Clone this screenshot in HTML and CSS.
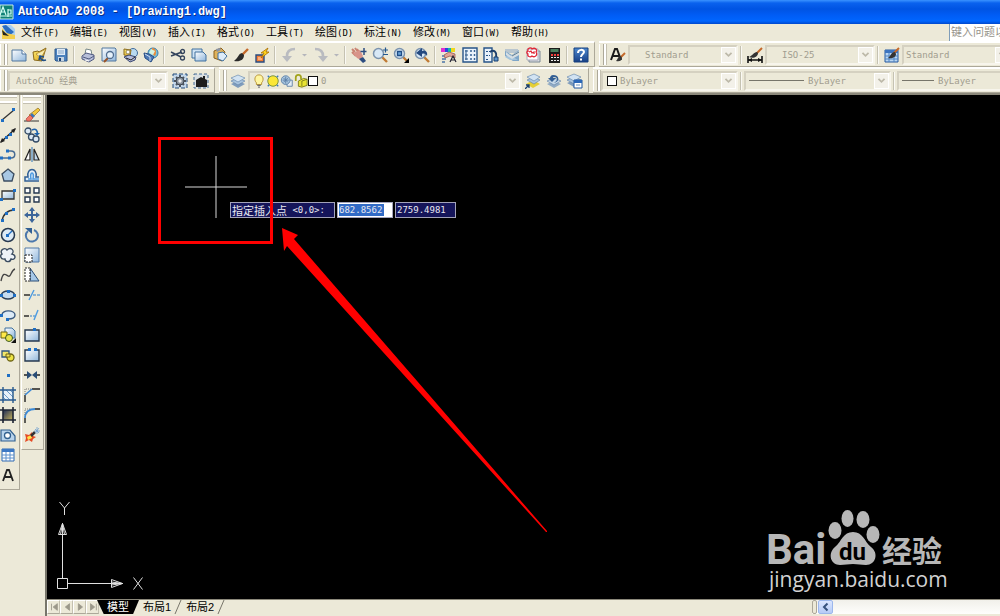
FILE: index.html
```html
<!DOCTYPE html>
<html lang="zh-CN">
<head>
<meta charset="utf-8">
<title>AutoCAD 2008 - [Drawing1.dwg]</title>
<link rel="stylesheet" href="styles.css">
</head>
<body>
<svg class="defs" aria-hidden="true">
  <defs>
    <linearGradient id="page" x1="0" y1="0" x2="1" y2="1"><stop offset="0" stop-color="#fff"/><stop offset="1" stop-color="#8fb6dc"/></linearGradient>
    <linearGradient id="gold" x1="0" y1="0" x2="1" y2="1"><stop offset="0" stop-color="#fff27a"/><stop offset="1" stop-color="#d99a10"/></linearGradient>
    <linearGradient id="blue" x1="0" y1="0" x2="0" y2="1"><stop offset="0" stop-color="#4f8ad0"/><stop offset="1" stop-color="#173f86"/></linearGradient>
    <linearGradient id="dark" x1="0" y1="0" x2="1" y2="1"><stop offset="0" stop-color="#1c2a55"/><stop offset="1" stop-color="#c8b45a"/></linearGradient>
    <g id="layers"><path d="M1 11l7-3 7 3-7 4z" fill="#7f9cbc"/><path d="M1 8l7-3 7 3-7 4z" fill="#a9c4de" stroke="#5d80a8" stroke-width=".6"/><path d="M1 5l7-3 7 3-7 4z" fill="#d2e3f2" stroke="#5d80a8" stroke-width=".6"/></g>
    <g id="lens"><path d="M10 10l5 5" stroke="#c07a34" stroke-width="2.4"/><circle cx="6.5" cy="6.5" r="5" fill="#d8e8f6" stroke="#7b93ad" stroke-width="1.5"/></g>
    <g id="brush"><path d="M15 2l-6 6" stroke="#c4682a" stroke-width="2.4"/><path d="M11 8L9 6c-4 1-3 4-8 8 6 1 10-1 10-6z" fill="#2b2b2b"/></g>
    <g id="chevron"><path d="M4 5l3.500 3.500L11 5" fill="none" stroke="#bdb9a9" stroke-width="2"/></g>
  </defs>
</svg>

<header class="title">
  <svg class="logo" viewBox="0 0 14 16"><path d="M0 1h13v14H0z" fill="#0f8176" stroke="#c9ece4"/><path d="M0 11l3-8 3 8M1 8h4M8 5v8M8 6h3v4H8M0 12h12" fill="none" stroke="#d5fff5" stroke-width="1.200"/></svg>
  <h1>AutoCAD 2008 - [Drawing1.dwg]</h1>
</header>

<nav class="menu">
  <svg class="doc" viewBox="0 0 16 16"><path d="M3 1h8l4 4v9H3z" fill="#a9d0f2"/><path d="M2 2l4-1 8 7-5 4z" fill="#2b6cc0"/><path d="M2 4l4 5 9 2v4H2z" fill="#f4cf4a"/><path d="M2 6l7 6-6-1z" fill="#222"/></svg>
  <button><b>文件</b>(F)</button><button><b>编辑</b>(E)</button><button><b>视图</b>(V)</button><button><b>插入</b>(I)</button><button><b>格式</b>(O)</button><button><b>工具</b>(T)</button><button><b>绘图</b>(D)</button><button><b>标注</b>(N)</button><button><b>修改</b>(M)</button><button><b>窗口</b>(W)</button><button><b>帮助</b>(H)</button>
  <input class="ask" aria-label="帮助" placeholder="键入问题以获取帮助">
</nav>

<div class="row">
  <div class="bar">
    <i class="grip"></i>
    <button aria-label="新建"><svg viewBox="0 0 16 16"><path d="M1 3h10l4 4v7H1z" fill="url(#page)" stroke="#51779e"/><path d="M11 3v4h4" fill="#fff" stroke="#51779e"/></svg></button>
    <button aria-label="打开"><svg viewBox="0 0 16 16"><path d="M1 5l5-1 1 1 7-4-4 13-8-1z" fill="url(#gold)" stroke="#8a6a1c"/><path d="M4 7l10-5-5 9z" fill="#f8edb0" stroke="#a98024" stroke-width=".7"/><path d="M14 13c-3 1-5 0-6-3M7 13l1-4 4 1" fill="none" stroke="#214f86" stroke-width="1.600"/></svg></button>
    <button aria-label="保存"><svg viewBox="0 0 16 16"><path d="M2 2h12v12H3l-1-1z" fill="#4d82bd" stroke="#2b578c"/><path d="M4 2h8v6H4z" fill="#dfebf7"/><path d="M5 4h6M5 6h6" stroke="#8aa9c9"/><path d="M5 10h6v4H5z" fill="#c5d4e3"/><path d="M6 11h2v3H6z" fill="#214575"/></svg></button>
    <i class="sep"></i>
    <button aria-label="打印"><svg viewBox="0 0 16 16"><path d="M5 7l1-5 5 1 1 5z" fill="#fff" stroke="#788"/><path d="M2 9l4-3 8 2v4l-5 3-7-3z" fill="#b8bfd9" stroke="#505a80"/><path d="M3 10l6 2 5-3" fill="none" stroke="#505a80"/><path d="M5 13l4 1" stroke="#fff"/></svg></button>
    <button aria-label="打印预览"><svg viewBox="0 0 16 16"><path d="M1 1h13l1 1v12H1z" fill="url(#page)" stroke="#51779e"/><path d="M7 11l-4 4" stroke="#9b5426" stroke-width="2"/><circle cx="9" cy="8" r="3.500" fill="#e6f1fa" stroke="#526e90" stroke-width="1.300"/></svg></button>
    <button aria-label="发布"><svg viewBox="0 0 16 16"><circle cx="11" cy="6" r="4.500" fill="#b9daf0" stroke="#426a98"/><path d="M2 2l7 1-1 6-6-1z" fill="url(#gold)" stroke="#8a6a1c"/><circle cx="6" cy="5" r="2" fill="#fff" stroke="#985"/><path d="M2 10l5-2 7 2-1 3-5 2z" fill="#b6bddc" stroke="#3a4670"/><path d="M4 11l5 2 4-3" fill="none" stroke="#222"/></svg></button>
    <button aria-label="三维 DWF"><svg viewBox="0 0 16 16"><circle cx="10" cy="6" r="5" fill="#74c1dc" stroke="#3d7ca8"/><path d="M9 1c4 0 5 4 3 8l-3-2z" fill="#ec8a36"/><path d="M8 2l4 2-2 4-4-2z" fill="#d5f2e0"/><path d="M1 6l5 1 5 3-3 5-6-4z" fill="#4e79b6" stroke="#284d84"/><path d="M2 7l5 3v4" fill="none" stroke="#cde"/></svg></button>
    <i class="sep"></i>
    <button aria-label="剪切"><svg viewBox="0 0 16 16"><path d="M1 5l10 5M1 9l11-4" stroke="#34445c" stroke-width="1.500"/><circle cx="12.500" cy="4.500" r="2" fill="none" stroke="#34445c" stroke-width="1.300"/><circle cx="12.500" cy="11" r="2" fill="none" stroke="#34445c" stroke-width="1.300"/></svg></button>
    <button aria-label="复制"><svg viewBox="0 0 16 16"><path d="M1 2h10v9H1z" fill="#cfe3f4" stroke="#41719f"/><path d="M4 5h8l3 3v6H4z" fill="url(#page)" stroke="#41719f"/></svg></button>
    <button aria-label="粘贴"><svg viewBox="0 0 16 16"><path d="M2 4l7-3 4 4-3 9-8-3z" fill="#e0b35a" stroke="#8a6020"/><path d="M4 2l4-1 1 2-4 2z" fill="#8b95a6"/><path d="M6 6l5-1 4 4-4 5-5-2z" fill="#dcebf8" stroke="#41719f"/></svg></button>
    <button aria-label="特性匹配"><svg viewBox="0 0 16 16"><use href="#brush"/></svg></button>
    <button aria-label="块编辑器"><svg viewBox="0 0 16 16"><path d="M2 8h8v7H2z" fill="#f37c35" stroke="#284c80" stroke-width="1.400"/><path d="M4 10h4v3H4z" fill="#ffb07a"/><path d="M14 1L7 6h3l-3 5 8-6h-3z" fill="#ffd51e" stroke="#a76a00" stroke-width=".8"/></svg></button>
    <i class="sep"></i>
    <button aria-label="放弃"><svg viewBox="0 0 16 16"><path d="M14 2C8 2 6 5 6 9" fill="none" stroke="#b9bbc0" stroke-width="2.600"/><path d="M1 9h10l-5 6z" fill="#b9bbc0"/></svg></button>
    <button class="drop" aria-label="放弃列表"><svg viewBox="0 0 8 16"><path d="M1 7h5L3.500 9.500z" fill="#b4b5bb"/></svg></button>
    <button aria-label="重做"><svg viewBox="0 0 16 16"><path d="M2 2c6 0 8 3 8 7" fill="none" stroke="#b9bbc0" stroke-width="2.600"/><path d="M5 9h10l-5 6z" fill="#b9bbc0"/></svg></button>
    <button class="drop" aria-label="重做列表"><svg viewBox="0 0 8 16"><path d="M1 7h5L3.500 9.500z" fill="#b4b5bb"/></svg></button>
    <i class="sep"></i>
    <button aria-label="实时平移"><svg viewBox="0 0 16 16"><path d="M1 2l3 3M1 5l4 4M4 1l4 5M6 2l4 6" stroke="#c98272" stroke-width="2"/><path d="M2 6l7-3 3 6-2 4-4-2z" fill="#d8948a"/><path d="M8 12l4-2 3 4-3 2z" fill="#2c4c80"/><path d="M13 1v7M9.500 4.500h6" stroke="#2c4c80" stroke-width="1.500"/></svg></button>
    <button aria-label="实时缩放"><svg viewBox="0 0 16 16"><use href="#lens"/><path d="M11 3h5M13.500 .5v5M11 7.500h5" stroke="#24588f" stroke-width="1.200"/></svg></button>
    <button aria-label="窗口缩放"><svg viewBox="0 0 16 16"><use href="#lens"/><path d="M4.500 4.500h4v4h-4z" fill="#6ba4d8" stroke="#1f4d86" stroke-width="1.300"/><path d="M16 11v5h-5z" fill="#000"/></svg></button>
    <button aria-label="缩放上一个"><svg viewBox="0 0 16 16"><use href="#lens"/><path d="M13 9c1-5-2-6-5-5V1L2 6l6 4V7c2-1 4 0 5 2z" fill="#254a80"/></svg></button>
    <i class="sep"></i>
    <button aria-label="特性"><svg viewBox="0 0 16 16"><path d="M0 1h4v4H0z" fill="#e030d0"/><path d="M4 1h3v4H4z" fill="#2b48e0"/><path d="M7 1h3v4H7z" fill="#12b8b0"/><path d="M10 1h4v4h-4z" fill="#f0d81c"/><path d="M3 8l5-3 6 2v4l-5-2-5 2z" fill="#e2a596" stroke="#8b4d42" stroke-width=".7"/><path d="M1 9h2M1 12h4M1 15h3" stroke="#4b74a6" stroke-width="1.500"/><path d="M9 15l3-6 3 6M10 13h4" fill="none" stroke="#223" stroke-width="1.200"/></svg></button>
    <button aria-label="设计中心"><svg viewBox="0 0 16 16"><path d="M1 1h14v14H1z" fill="#e9f2fb" stroke="#275488" stroke-width="1.400"/><path d="M4 3v10M3 4h3M3 8h3M3 12h3" stroke="#275488"/><path d="M8.500 3.500h1v1h-1zM12 3.500h1v1h-1zM8.500 7.500h1v1h-1zM12 7.500h1v1h-1zM8.500 11.500h1v1h-1zM12 11.500h1v1h-1z" fill="#7ba7d3" stroke="#275488" stroke-width=".8"/></svg></button>
    <button aria-label="工具选项板"><svg viewBox="0 0 16 16"><path d="M1 1h8v14H1z" fill="#e9f2fb" stroke="#275488" stroke-width="1.400"/><path d="M3 4h2v1H3zM3 8h2v1H3zM3 12h2v1H3zM6 4h1v1H6zM6 8h1v1H6z" fill="#275488"/><path d="M7 5c4-3 7 0 6 5" fill="none" stroke="#1c3f6c" stroke-width="1.800"/><path d="M11 10h4v4h-4z" fill="#5e95cc" stroke="#173e70"/></svg></button>
    <button aria-label="图纸集管理器"><svg viewBox="0 0 16 16"><path d="M1 2h13v4H1z" fill="#b9c6cf"/><path d="M1 4l7 4 7-5v11H9L1 9z" fill="#7fa6c8"/><path d="M1 10l5-2 8 5H6z" fill="#a4c4dc"/><path d="M2 5l5 4 8-5v4l-7 4-6-4z" fill="#d5dee3"/><path d="M8 9l7-4" stroke="#5f7d92"/></svg></button>
    <button aria-label="标记集管理器"><svg viewBox="0 0 16 16"><path d="M4 4h11v11H4z" fill="#d9dde0" stroke="#7a8794"/><path d="M2 2h11v11H2z" fill="#fff" stroke="#aab"/><path d="M3 4c-1-3 3-4 4-2 3-2 6 1 4 3 2 3-1 6-4 4-2 2-5 0-4-2-2-1-1-3 0-3zM4 5l2-1 1 2 2-1v2" fill="none" stroke="#e02838" stroke-width="1.300"/></svg></button>
    <button aria-label="快速计算器"><svg viewBox="0 0 16 16"><path d="M3 1h11v15H3z" fill="#1b1b1b"/><path d="M4.500 2h8v3h-8z" fill="#4b8060"/><path d="M5 7h2v2H5zM8 7h2v2H8zM11 7h2v2h-2z" fill="#f04040"/><path d="M5 10h2v1H5zM8 10h2v1H8zM11 10h2v1h-2zM5 13h2v1H5zM8 13h2v1H8zM11 13h2v1h-2z" fill="#eee"/></svg></button>
    <i class="sep"></i>
    <button aria-label="帮助"><svg viewBox="0 0 16 16"><path d="M1 1h14v14H1z" fill="url(#blue)" stroke="#173f7c"/><path d="M5 6c0-4 6-4 6-1 0 2-3 2-3 5M8 11.500v2" fill="none" stroke="#fff" stroke-width="2"/></svg></button>
  </div>
  <div class="bar last">
    <i class="grip"></i>
    <button aria-label="文字样式"><svg viewBox="0 0 16 16"><path d="M1 13L5 2h2l4 11M3 9h6" fill="none" stroke="#1b1b1b" stroke-width="2"/><path d="M15 6l-5 5" stroke="#c4682a" stroke-width="2"/><path d="M11 9c-3 0-3 3-5 5 4 1 6-1 6-3z" fill="#333"/></svg></button>
    <label class="combo style"><select disabled aria-label="文字样式"><option>Standard</option></select><svg viewBox="0 0 15 15"><use href="#chevron"/></svg></label>
    <i class="sep"></i>
    <button aria-label="标注样式"><svg viewBox="0 0 16 16"><path d="M1 9v7M15 9v7M1 13h14" stroke="#111" stroke-width="1.600"/><path d="M1 13l4-2v4zM15 13l-4-2v4z" fill="#111"/><path d="M15 1L9 7" stroke="#c4682a" stroke-width="2"/><path d="M10 5c-3 0-5 4-8 5 4 2 9 0 9-4z" fill="#333"/></svg></button>
    <label class="combo style"><select disabled aria-label="标注样式"><option>ISO-25</option></select><svg viewBox="0 0 15 15"><use href="#chevron"/></svg></label>
    <i class="sep"></i>
    <button aria-label="表格样式"><svg viewBox="0 0 16 16"><path d="M1 3h13v12H1z" fill="#b9d6f2" stroke="#2558a0"/><path d="M1 3h13v3H1z" fill="#3c74c0"/><path d="M1 9h13M1 12h13M5 6v9M10 6v9" stroke="#4e84c4"/><path d="M15 1L9 7" stroke="#c4682a" stroke-width="2"/><path d="M11 5c-4 0-4 4-7 6 4 1 8-1 8-4z" fill="#333"/></svg></button>
    <label class="combo style near"><select disabled aria-label="表格样式"><option>Standard</option></select><svg viewBox="0 0 15 15"><use href="#chevron"/></svg></label>
  </div>
</div>

<div class="row">
  <div class="bar">
    <i class="grip"></i>
    <label class="combo space"><select disabled aria-label="工作空间"><option>AutoCAD 经典</option></select><svg viewBox="0 0 15 15"><use href="#chevron"/></svg></label>
    <button aria-label="工作空间设置"><svg viewBox="0 0 16 16"><path d="M1 1h14v14H1z" fill="#c3d7ea" stroke="#234a78" stroke-dasharray="4 2"/><path d="M8 2v12M2 8h12M4 4l8 8M12 4l-8 8" stroke="#4c565f" stroke-width="2"/><circle cx="8" cy="8" r="4" fill="#87919b" stroke="#3e4650"/><circle cx="8" cy="8" r="1.700" fill="#f0f0f0"/></svg></button>
    <button aria-label="我的工作空间"><svg viewBox="0 0 16 16"><path d="M1 1h14v14H1z" fill="#d9dfe2" stroke="#456a94" stroke-dasharray="3 2"/><path d="M3 7l5-3 2 1V3h2v3l2 1v7H3z" fill="#1d1d1d"/></svg></button>
  </div>
  <div class="bar">
    <i class="grip"></i>
    <button aria-label="图层特性管理器"><svg viewBox="0 0 16 16"><use href="#layers"/></svg></button>
    <label class="combo layer">
      <svg viewBox="0 0 16 16"><path d="M5 10C2 7 3 1 8 1s6 6 3 9v2H5z" fill="#fff6a0" stroke="#b28c28"/><path d="M6 13h4M7 15h2" stroke="#6c6c74" stroke-width="1.500"/></svg><svg viewBox="0 0 16 16"><path d="M2 2l2 2M14 2l-2 2M2 14l2-2M14 14l-2-2" stroke="#3a78b8" stroke-width="1.500"/><circle cx="8" cy="8" r="6" fill="#fbe736" stroke="#6f8a35"/></svg><svg viewBox="0 0 16 16"><path d="M8 7h6v7H8z" fill="#e3edf5" stroke="#5b7fa6"/><circle cx="6.500" cy="7" r="5" fill="#a9c6df" stroke="#5b7fa6"/><path d="M6.500 3v8M3 7h7M4 4.500l5 5M9 4.500l-5 5" stroke="#5b7fa6"/></svg><svg viewBox="0 0 16 16"><path d="M2 8V4c0-4 6-4 6 0v2" fill="none" stroke="#a3a31c" stroke-width="2"/><path d="M5 8l6-3 4 1v7l-6 2-4-1z" fill="#e8e334" stroke="#79791a"/><path d="M9 8v6M9 8l6-2" stroke="#79791a"/></svg><i class="swatch"></i>
      <select disabled aria-label="图层"><option>0</option></select><svg viewBox="0 0 15 15"><use href="#chevron"/></svg></label>
    <button aria-label="置为当前图层"><svg viewBox="0 0 16 16"><path d="M1 11l7-4 7 4-7 4z" fill="#e5cf36"/><path d="M2 7l7-3 6 3-6 4z" fill="#a9c4de" stroke="#5d80a8" stroke-width=".6"/><path d="M2 4l7-3 6 3-6 4z" fill="#d2e3f2" stroke="#5d80a8" stroke-width=".6"/><path d="M0 16l4-4M1 12h3v3" fill="none" stroke="#173e70" stroke-width="1.300"/></svg></button>
    <button aria-label="上一个图层"><svg viewBox="0 0 16 16"><path d="M1 11l7-3 7 3-7 4z" fill="#91abc4"/><path d="M1 8l7-3 7 3-7 4z" fill="#c5d7e7" stroke="#5d80a8" stroke-width=".6"/><path d="M8 10c6-1 6-8-1-8C5 2 4 4 4 5H2l4 4 4-4H7c0-2 4-1 4 1 0 1-1 3-3 4z" fill="#335f94"/></svg></button>
    <button aria-label="图层状态"><svg viewBox="0 0 16 16"><g transform="translate(-1 -1)"><use href="#layers"/></g><path d="M7 7h8v8H7z" fill="#fff" stroke="#1e56a0"/><path d="M7 7h8v3H7z" fill="#2c68b8"/><path d="M9 12h4" stroke="#6e93bc"/></svg></button>
  </div>
  <div class="bar last">
    <i class="grip"></i>
    <label class="combo color"><i class="swatch"></i><select disabled aria-label="颜色"><option>ByLayer</option></select><svg viewBox="0 0 15 15"><use href="#chevron"/></svg></label>
    <i class="sep"></i>
    <label class="combo line"><i class="rule"></i><select disabled aria-label="线型"><option>ByLayer</option></select><svg viewBox="0 0 15 15"><use href="#chevron"/></svg></label>
    <i class="sep"></i>
    <label class="combo weight"><i class="rule"></i><select disabled aria-label="线宽"><option>ByLayer</option></select><svg viewBox="0 0 15 15"><use href="#chevron"/></svg></label>
  </div>
</div>

<main class="work">
  <div class="side draw">
    <i class="hgrip"></i>
    <button aria-label="直线"><svg viewBox="0 0 16 16"><path d="M2 13L14 3" stroke="#333" stroke-width="1.300"/><path d="M1 12h3v3H1zM12 1h3v3h-3z" fill="#1f6fc4"/></svg></button>
    <button aria-label="构造线"><svg viewBox="0 0 16 16"><path d="M1 15L15 2" stroke="#222" stroke-width="1.400"/><path d="M0 16l2-5 3 3zM16 1l-2 5-3-3z" fill="#222"/><path d="M5 9h3v3H5zM9 6h3v3H9z" fill="#1f6fc4"/></svg></button>
    <button aria-label="多段线"><svg viewBox="0 0 16 16"><path d="M2 11h9c5 0 5-7 0-7H8" fill="none" stroke="#486c94" stroke-width="1.500"/><path d="M0 9.500h3v3H0zM8 9.500h3v3H8zM6 2.500h3v3H6z" fill="#1f6fc4"/></svg></button>
    <button aria-label="正多边形"><svg viewBox="0 0 16 16"><path d="M8 2l6 5-2 7H4L2 7z" fill="#a8c8e4" stroke="#3b4c60" stroke-width="1.300"/></svg></button>
    <button aria-label="矩形"><svg viewBox="0 0 16 16"><path d="M2 4h12v8H2z" fill="url(#page)" stroke="#333" stroke-width="1.300"/><path d="M0 11h3v3H0zM13 2h3v3h-3z" fill="#1f6fc4"/></svg></button>
    <button aria-label="圆弧"><svg viewBox="0 0 16 16"><path d="M2 14C3 7 8 3 14 3" fill="none" stroke="#333" stroke-width="1.400"/><path d="M1 12h3v3H1zM5 5h3v3H5zM12 1h3v3h-3z" fill="#1f6fc4"/></svg></button>
    <button aria-label="圆"><svg viewBox="0 0 16 16"><circle cx="8" cy="8" r="6.500" fill="#dceaf6" stroke="#26384f" stroke-width="1.500"/><path d="M8 8l4-4" stroke="#1f6fc4" stroke-width="1.300"/><path d="M6 7h3v3H6z" fill="#1f6fc4"/></svg></button>
    <button aria-label="修订云线"><svg viewBox="0 0 16 16"><path d="M2 7C-1 3 5 0 7 3c4-4 8 1 5 4 5 1 3 7-1 5-1 4-6 3-6 0-5 1-5-4-3-5z" fill="#edf2f7" stroke="#3b4c60" stroke-width="1.400"/></svg></button>
    <button aria-label="样条曲线"><svg viewBox="0 0 16 16"><path d="M1 14c2-9 4-7 7-5s3-6 7-7" fill="none" stroke="#444" stroke-width="1.400"/></svg></button>
    <button aria-label="椭圆"><svg viewBox="0 0 16 16"><ellipse cx="8" cy="8" rx="6.500" ry="4" fill="#c7dcef" stroke="#2b3e56" stroke-width="1.400"/><path d="M0 7h3v3H0zM13 7h3v3h-3zM7 3h3v3H7z" fill="#1f6fc4"/></svg></button>
    <button aria-label="椭圆弧"><svg viewBox="0 0 16 16"><path d="M2 8c0-6 13-5 13 0 0 4-5 4-7 4" fill="#dceaf6" stroke="#3b5a80" stroke-width="1.400"/><path d="M0 7h3v3H0zM6 11h3v3H6z" fill="#1f6fc4"/></svg></button>
    <button aria-label="插入块"><svg viewBox="0 0 16 16"><path d="M5 1h7l3 3v7H5z" fill="url(#page)" stroke="#41719f"/><path d="M1 5h6v6H1z" fill="#ffe94a" stroke="#6d6514"/><circle cx="9" cy="11" r="3.500" fill="#e8e44c" stroke="#3d5a20"/><path d="M16 11v5h-5z" fill="#111"/></svg></button>
    <button aria-label="创建块"><svg viewBox="0 0 16 16"><path d="M2 4h7v6H2z" fill="#f1e76a" stroke="#31577c" stroke-width="1.300"/><circle cx="10.500" cy="10.500" r="3.500" fill="#eee443" stroke="#6d6514" stroke-width="1.300"/><path d="M6 7h4v3H6z" fill="#f4e35a" stroke="#6d6514"/></svg></button>
    <button aria-label="点"><svg viewBox="0 0 16 16"><path d="M7 7h3v3H7z" fill="#1f6fc4"/></svg></button>
    <button aria-label="图案填充"><svg viewBox="0 0 16 16"><path d="M3 3h10v10H3z" fill="#e8f1f9"/><path d="M3 6l7 7M3 10l3 3M6 3l7 7M10 3l3 3" stroke="#6d9cc8"/><path d="M3 0v16M13 0v16M0 3h16M0 13h16" stroke="#26588e" stroke-width="1.400"/></svg></button>
    <button aria-label="渐变色"><svg viewBox="0 0 16 16"><path d="M3 3h10v10H3z" fill="url(#dark)"/><path d="M3 0v16M13 0v16M0 3h16M0 13h16" stroke="#1d2433" stroke-width="1.600"/></svg></button>
    <button aria-label="面域"><svg viewBox="0 0 16 16"><path d="M1 3h9l5 6v5H1z" fill="#b8d3ec" stroke="#31608f" stroke-width="1.200"/><circle cx="7.500" cy="8.500" r="3" fill="#fff" stroke="#31608f" stroke-width="1.300"/></svg></button>
    <button aria-label="表格"><svg viewBox="0 0 16 16"><path d="M2 2h12v12H2z" fill="#fff" stroke="#2d68b2"/><path d="M2 2h12v3H2z" fill="#3c78c4"/><path d="M2 8h12M2 11h12M6 5v9M10 5v9" stroke="#5d90cc"/></svg></button>
    <button aria-label="多行文字"><svg viewBox="0 0 16 16"><path d="M3 14L7 3h2l4 11M5 10h6" fill="none" stroke="#222" stroke-width="1.800"/></svg></button>
  </div>
  <div class="side modify">
    <i class="hgrip"></i>
    <button aria-label="删除"><svg viewBox="0 0 16 16"><path d="M0 14h15" stroke="#333"/><path d="M14 1l2 2-8 8-3-3z" fill="#f4c93c" stroke="#8a6a1c" stroke-width=".7"/><path d="M8 6l3 3-2 2-3-3z" fill="#3d75b8"/><path d="M6 8l3 3-3 3H3l-1-2z" fill="#f07a68" stroke="#a33" stroke-width=".6"/></svg></button>
    <button aria-label="复制对象"><svg viewBox="0 0 16 16"><circle cx="4" cy="4" r="3" fill="#dbe8f4" stroke="#334b66" stroke-width="1.300"/><circle cx="7.500" cy="10" r="3" fill="#dbe8f4" stroke="#334b66" stroke-width="1.300"/><circle cx="12" cy="12" r="3" fill="#dbe8f4" stroke="#334b66" stroke-width="1.300"/><path d="M8 3c4-2 6 1 5 4" fill="none" stroke="#1d62ac" stroke-width="1.500"/><path d="M10 6h6l-3 3z" fill="#1d62ac"/></svg></button>
    <button aria-label="镜像"><svg viewBox="0 0 16 16"><path d="M6 2v11H1z" fill="#fff" stroke="#222" stroke-width="1.200"/><path d="M10 2v11h5z" fill="#c5dbee" stroke="#222" stroke-width="1.200"/><path d="M8 0v15" stroke="#2872b8"/></svg></button>
    <button aria-label="偏移"><svg viewBox="0 0 16 16"><path d="M15 14H1v-4h3C2 0 14 0 12 10h3" fill="#e4eef6" stroke="#315f94" stroke-width="1.500"/><path d="M4 12h3C5 4 11 4 9 12h6" fill="none" stroke="#4c9ae0" stroke-width="1.500"/></svg></button>
    <button aria-label="阵列"><svg viewBox="0 0 16 16"><path d="M1 1h5v5H1zM10 1h5v5h-5zM1 10h5v5H1zM10 10h5v5h-5z" fill="#fff" stroke="#26384f" stroke-width="1.400"/></svg></button>
    <button aria-label="移动"><svg viewBox="0 0 16 16"><path d="M8 2v12M2 8h12" stroke="#3c659a" stroke-width="2"/><path d="M8 0l3 4H5zM8 16l3-4H5zM0 8l4-3v6zM16 8l-4-3v6z" fill="#3c659a"/></svg></button>
    <button aria-label="旋转"><svg viewBox="0 0 16 16"><path d="M4 4a6 6 0 1 0 6-1" fill="none" stroke="#4c78ac" stroke-width="2"/><path d="M1 1h7v6z" fill="#315f94"/></svg></button>
    <button aria-label="缩放"><svg viewBox="0 0 16 16"><path d="M1 1h14v14H1z" fill="url(#page)" stroke="#537ba8"/><path d="M1 8h7v7H1z" fill="#fff" stroke="#222" stroke-dasharray="2 1"/></svg></button>
    <button aria-label="拉伸"><svg viewBox="0 0 16 16"><path d="M6 1l9 13H6z" fill="#a7c9e8" stroke="#284c76"/><path d="M1 1h5v13H1z" fill="#fff" stroke="#222" stroke-dasharray="2 1"/></svg></button>
    <button aria-label="修剪"><svg viewBox="0 0 16 16"><path d="M0 8h6" stroke="#222" stroke-width="1.400"/><path d="M9 8h7" stroke="#2f80cc" stroke-dasharray="3 1"/><path d="M5 13l5-10" stroke="#4a9be2" stroke-width="1.400"/></svg></button>
    <button aria-label="延伸"><svg viewBox="0 0 16 16"><path d="M0 9h5" stroke="#222" stroke-width="1.400"/><path d="M6 9h5" stroke="#2f80cc" stroke-dasharray="2 1"/><path d="M10 13l4-10" stroke="#4a9be2" stroke-width="1.400"/></svg></button>
    <button aria-label="打断于点"><svg viewBox="0 0 16 16"><path d="M1 3h14v11H1z" fill="url(#page)" stroke="#26384f" stroke-width="1.400"/><path d="M9 1h3v3H9z" fill="#1f6fc4"/></svg></button>
    <button aria-label="打断"><svg viewBox="0 0 16 16"><path d="M5 3H1v11h14V3h-4" fill="url(#page)" stroke="#26384f" stroke-width="1.400"/><path d="M4 1h3v3H4zM10 1h3v3h-3z" fill="#1f6fc4"/></svg></button>
    <button aria-label="合并"><svg viewBox="0 0 16 16"><path d="M0 8h6M10 8h6" stroke="#222" stroke-width="1.400"/><path d="M3 4l5 4-5 4zM13 4L8 8l5 4z" fill="#284c76"/></svg></button>
    <button aria-label="倒角"><svg viewBox="0 0 16 16"><path d="M1 15V8M8 2h8" stroke="#222" stroke-width="1.400"/><path d="M1 8l7-6" stroke="#3d8ad6" stroke-width="1.600"/><path d="M1 7V2h6" fill="none" stroke="#777" stroke-dasharray="1 1"/></svg></button>
    <button aria-label="圆角"><svg viewBox="0 0 16 16"><path d="M1 16v-5M11 2h5" stroke="#222" stroke-width="1.400"/><path d="M1 11c0-6 4-9 10-9" fill="none" stroke="#3d8ad6" stroke-width="1.800"/><path d="M1 8V2h6" fill="none" stroke="#777" stroke-dasharray="1 1"/></svg></button>
    <button aria-label="分解"><svg viewBox="0 0 16 16"><path d="M1 7l4 1 3-3 1 4 3 1-3 2-1 3-3-2-4 2 1-4z" fill="#e54a24"/><path d="M3 10l4-2 1 3-4 2z" fill="#ffe14a"/><path d="M7 9l4-4" stroke="#333" stroke-width="2.500"/><path d="M11 2l4 4M15 1l-4 5M13 0v7M10 4h6" stroke="#6f9ed0" stroke-width=".8"/></svg></button>
  </div>

  <section class="view">
    <div class="canvas">
      <svg class="cursor" viewBox="0 0 64 64"><path d="M32 1v62M1 32h62" stroke="#d8d8d8"/></svg>
      <div class="entry">
        <label for="px"><b>指定插入点</b> &lt;0,0&gt;:</label>
        <span class="field active"><input id="px" value="682.8562"></span>
        <span class="field"><input aria-label="Y" value="2759.4981"></span>
      </div>
      <svg class="marks" viewBox="0 0 400 410"><path d="M1.500 2.500h112v104h-112z" fill="none" stroke="#f00" stroke-width="3"/><path d="M124 92l16 7-4 4 253 292v1l-1 0-259-286-3 5z" fill="#f00"/></svg>
      <svg class="ucs" viewBox="0 0 100 100"><g fill="none" stroke="#e0e0e0"><path d="M6.500 79.500h10v10h-10zM11.500 79V24M17 84.500h55M7.500 35.500l4-11 4 11zM9.500 35.500l2-11 2 11M60.500 80.500l11 4-11 4zM60.500 83l11 1.500-11 1.500M8.500 3l5 6 5-6M13.500 9v7M82.500 78.500l9 12M91.500 78.500l-9 12"/></g></svg>
      <svg class="baidu" viewBox="0 0 190 90" role="img">
        <g fill="#b7b7b7"><ellipse cx="71" cy="21.500" rx="6.500" ry="8.500"/><ellipse cx="83.500" cy="9.500" rx="6" ry="8.500"/><ellipse cx="99" cy="10.500" rx="6.500" ry="8.500"/><ellipse cx="109" cy="25.500" rx="6.500" ry="8.500"/><path d="M89 23c10 0 11 9 18 15 8 6 5 18-5 18-5 0-8-1-13-1s-8 1-13 1c-9 0-13-11-5-18 7-6 8-15 18-15z"/>
        <text class="bai" x="2" y="55">Bai</text><text class="exp" x="118" y="53">经验</text></g>
        <text class="du" x="75" y="51">du</text>
        <text class="site" x="5" y="78">jingyan.baidu.com</text>
      </svg>
    </div>
    <div class="tabs">
      <div class="steps">
        <button aria-label="第一个"><svg viewBox="0 0 12 12"><path d="M3 2v8M10 2v8L5 6z"/></svg></button><button aria-label="上一个"><svg viewBox="0 0 12 12"><path d="M9 2v8L4 6z"/></svg></button><button aria-label="下一个"><svg viewBox="0 0 12 12"><path d="M4 2v8l5-4z"/></svg></button><button aria-label="最后一个"><svg viewBox="0 0 12 12"><path d="M3 2v8l5-4zM10 2v8"/></svg></button>
      </div>
      <button class="tab on">模型</button>
      <button class="tab">布局1</button><svg class="slash" viewBox="0 0 8 14"><path d="M1 14L7 0"/></svg>
      <button class="tab">布局2</button><svg class="slash" viewBox="0 0 8 14"><path d="M1 14L7 0"/></svg>
      <div class="scroll"><i class="split"></i><button aria-label="向左滚动"><svg viewBox="0 0 14 12"><path d="M8.500 2.500L5 6l3.500 3.500" fill="none" stroke="#37527e" stroke-width="2"/></svg></button></div>
    </div>
  </section>
</main>
</body>
</html>
```

FILE: styles.css
```css
* { box-sizing: border-box; }
html, body { height: 100%; }
body {
  margin: 0;
  display: flex;
  flex-direction: column;
  overflow: hidden;
  background: #ece9d8;
  color: #000;
  font: 9px "DejaVu Sans Mono", "Noto Sans CJK SC", monospace;
}
button, input, select { font: inherit; color: inherit; border: 0; padding: 0; margin: 0; background: none; border-radius: 0; }
svg { display: block; flex: none; }
.defs { position: absolute; width: 0; height: 0; }

.title {
  flex: none;
  display: flex;
  align-items: center;
  gap: 4px;
  height: 24px;
  background: linear-gradient(#3a93ff 0, #0a62ee 3px, #0054e3 9px, #005cf5 15px, #0066ff 21px, #0048cc 24px);
}
.logo { width: 14px; height: 16px; }
.title h1 {
  margin: 0;
  color: #fff;
  font: bold 12px "Liberation Mono", monospace;
  text-shadow: 1px 1px #0a2f86;
}

.menu { flex: none; display: flex; align-items: stretch; height: 17px; }
.doc { width: 16px; height: 16px; margin-right: 5px; }
.menu button { width: 38px; margin-right: 11px; white-space: nowrap; text-align: left; line-height: 17px; }
.menu b, .entry b { font-weight: 400; font-size: 11px; }
.ask { width: 51px; margin-left: auto; padding-left: 1px; background: #fff; border-left: 1px solid #7f9db9; font-size: 11px; }
.ask::placeholder { color: #96938a; opacity: 1; }

.row { flex: none; display: flex; height: 26px; overflow: hidden; }
.bar {
  flex: none;
  display: flex;
  align-items: center;
  border-top: 2px solid #fff;
  border-right: 1px solid #aca899;
  border-bottom: 1px solid #aca899;
  padding-right: 3px;
  margin-right: 4px;
}
.bar.last { flex: 1 0 auto; margin-right: 0; }
.grip {
  flex: none;
  width: 7px;
  height: 21px;
  margin-right: 1px;
  border: solid #fff;
  border-width: 0 2px 0 1px;
  box-shadow: inset -1px 0 #aca899, 1px 0 #c4c0b0;
}
.sep { flex: none; width: 2px; height: 18px; margin: 0 2px; border-left: 1px solid #c5c2b2; border-right: 1px solid #faf9f4; }
.bar button { flex: none; width: 21px; height: 20px; display: grid; place-items: center; }
.bar button svg, .side button svg { width: 16px; height: 16px; }
.bar .drop { width: 11px; }
.bar .drop svg { width: 8px; }

.combo {
  flex: none;
  display: flex;
  align-items: center;
  height: 20px;
  border: 2px solid #d5d1c1;
  border-right-color: #f7f5ec;
  border-bottom-color: #f7f5ec;
  color: #a19d8f;
}
.combo select { flex: 1; min-width: 0; height: 16px; appearance: none; opacity: 1; color: #a19d8f; }
.combo > svg { width: 14px; height: 14px; }
.combo > select + svg { width: 15px; height: 16px; background: #f3f1e9; border: 1px solid #fff; }
.style { width: 110px; }
.style select { padding-left: 15px; }
.style.near select { padding-left: 2px; }
.space { width: 160px; margin-right: 1px; }
.space select { padding-left: 6px; }
.layer { width: 274px; padding-left: 2px; }
.color { width: 137px; padding-left: 4px; }
.line { width: 147px; padding-left: 3px; }
.weight { width: 147px; padding-left: 3px; }
.swatch { flex: none; width: 10px; height: 10px; background: #fff; border: 1px solid #111; margin-right: 3px; }
.rule { flex: none; height: 1px; background: #77756a; margin-right: 4px; }
.line .rule { width: 55px; }
.weight .rule { width: 32px; }

.work { flex: 1; min-height: 0; display: flex; align-items: flex-start; border-top: 2px solid #8b887a; }
.side { flex: none; display: flex; flex-direction: column; align-items: center; padding-bottom: 4px; border-right: 1px solid #aca899; border-bottom: 1px solid #aca899; }
.draw { width: 20px; padding-right: 3px; }
.modify { width: 23px; padding-right: 2px; border-left: 1px solid #fff; margin-left: 1px; }
.side button { width: 16px; height: 20px; display: grid; place-items: center; }
.hgrip { width: 18px; height: 8px; margin-bottom: 2px; border: solid #fff; border-width: 2px 0; box-shadow: inset 0 1px #c4c0b0, 0 1px #c4c0b0; }

.view { flex: 1; min-width: 0; align-self: stretch; display: flex; flex-direction: column; margin-left: 1px; border-left: 2px solid #77756a; }
.canvas { flex: 1; position: relative; overflow: hidden; background: #000; }
.cursor { position: absolute; left: 137px; top: 60px; width: 64px; height: 64px; }
.entry { position: absolute; left: 183px; top: 107px; display: flex; gap: 2px; color: #e8e8f0; }
.entry label, .field { display: flex; align-items: center; height: 16px; background: #15155a; border: 1px solid #a3a3ba; }
.entry label { width: 105px; padding-left: 1px; white-space: pre; }
.field { width: 61px; padding-left: 1px; }
.field input { width: 56px; height: 12px; }
.field.active { width: 56px; background: #fff; }
.active input { width: 45px; background: #316ac5; }
.marks { position: absolute; left: 111px; top: 41px; width: 400px; height: 410px; }
.ucs { position: absolute; left: 4px; bottom: 0; width: 100px; height: 100px; }
.baidu { position: absolute; right: 46px; bottom: 0; width: 190px; height: 90px; }
.bai { font: 700 42px Roboto, sans-serif; }
.du { font: 700 24px Roboto, sans-serif; }
.exp { font: 700 30px "Noto Sans CJK SC", sans-serif; }
.site { font: 21px "Open Sans", sans-serif; fill: #d2d2d2; }

.tabs { flex: none; display: flex; align-items: stretch; height: 17px; padding-bottom: 2px; border-top: 1px solid #8b887a; font: 11px "Liberation Sans", "Noto Sans CJK SC", sans-serif; }
.steps { display: flex; }
.steps button { width: 13px; display: grid; place-items: center; border: 1px solid #fff; border-right-color: #c4c0b0; border-bottom-color: #aca899; }
.steps svg { width: 10px; height: 10px; fill: #9b988a; stroke: #9b988a; }
.tab { padding: 0 3px 0 4px; line-height: 13px; }
.tab.on { width: 42px; padding: 0; margin-left: -2px; background: #000; color: #fff; clip-path: polygon(0 0, 100% 0, 86% 100%, 16% 100%); }
.slash { width: 8px; height: 14px; stroke: #77756a; }
.scroll { display: flex; width: 188px; margin-left: auto; background: linear-gradient(#f1f0ea, #fefefc); }
.split { width: 5px; border: 1px solid #aca899; border-radius: 2px; background: #ece9d8; }
.scroll button { width: 15px; margin-left: 1px; background: linear-gradient(#dbe6ff, #b6cbf6); border: 1px solid #9cb7ec; border-radius: 2px; display: grid; place-items: center; }
.scroll svg { width: 14px; height: 12px; }
```
